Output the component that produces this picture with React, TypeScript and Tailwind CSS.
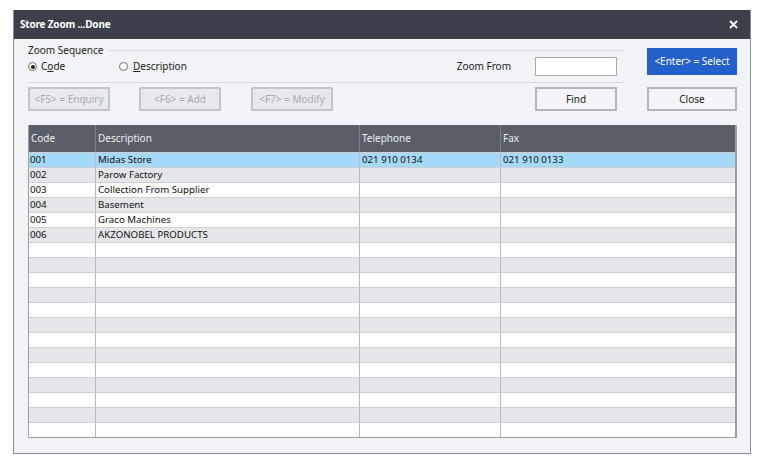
import React from "react";

const rows = [
  { code: "001", desc: "Midas Store", tel: "021 910 0134", fax: "021 910 0133" },
  { code: "002", desc: "Parow Factory", tel: "", fax: "" },
  { code: "003", desc: "Collection From Supplier", tel: "", fax: "" },
  { code: "004", desc: "Basement", tel: "", fax: "" },
  { code: "005", desc: "Graco Machines", tel: "", fax: "" },
  { code: "006", desc: "AKZONOBEL PRODUCTS", tel: "", fax: "" },
];

function Radio({ checked }: { checked?: boolean }) {
  return (
    <span className="w-[9px] h-[9px] rounded-full border border-[#6b6b6b] bg-white flex items-center justify-center">
      {checked && <span className="w-[4px] h-[4px] rounded-full bg-[#222]" />}
    </span>
  );
}

export default function App() {
  const allRows = Array.from({ length: 19 }, (_, i) => rows[i] ?? { code: "", desc: "", tel: "", fax: "" });

  return (
    <div className="min-h-screen bg-white pt-[10px] pl-[13px] font-['Noto_Sans',sans-serif]">
      <div className="w-[738px] h-[444px] bg-[#f2f3f7] border-x border-b border-[#8a8c92] flex flex-col">
        {/* Title bar */}
        <div className="h-[29px] bg-[#3c404c] flex items-center justify-between pl-[6px] pr-[12px] shrink-0">
          <span className="text-white text-[10px] font-bold tracking-[-0.2px]">Store Zoom ...Done</span>
          <svg width="9" height="9" viewBox="0 0 9 9">
            <path d="M1 1 L8 8 M8 1 L1 8" stroke="white" strokeWidth="1.8" />
          </svg>
        </div>

        <div className="flex flex-col flex-1 pl-[14px]">
          {/* Top controls */}
          <div className="flex gap-[22px]">
            <div className="w-[597px] flex flex-col pt-[5px]">
              <div className="h-[12px] flex items-center gap-[4px]">
                <span className="text-[10px] text-[#222] leading-none">Zoom Sequence</span>
                <div className="flex-1 h-[1px] bg-[#d8dae0]" />
              </div>
              <div className="h-[21px] flex items-center text-[10px] text-[#222]">
                <div className="flex items-center gap-[4px] w-[91px]">
                  <Radio checked />
                  <span>
                    C<span className="underline">o</span>de
                  </span>
                </div>
                <div className="flex items-center gap-[5px]">
                  <Radio />
                  <span>
                    <span className="underline">D</span>escription
                  </span>
                </div>
                <span className="ml-auto mr-[24px]">Zoom From</span>
                <div className="w-[82px] h-[19px] bg-white border border-[#a9abb0] mr-[8px]" />
              </div>
              <div className="mt-[5px] h-[1px] bg-[#d8dae0]" />
              <div className="mt-[4px] flex items-center text-[10px]">
                <button className="w-[82px] h-[24px] border-2 border-[#c4c6cb] bg-[#e8e9ec] text-[#a8aab0]">&lt;F5&gt; = Enquiry</button>
                <button className="ml-[29px] w-[82px] h-[24px] border-2 border-[#c4c6cb] bg-[#e8e9ec] text-[#a8aab0]">&lt;F6&gt; = Add</button>
                <button className="ml-[30px] w-[82px] h-[24px] border-2 border-[#c4c6cb] bg-[#e8e9ec] text-[#a8aab0]">&lt;F7&gt; = Modify</button>
                <button className="ml-auto mr-[8px] w-[82px] h-[24px] border-2 border-[#b4b6bb] bg-[#f4f5f8] text-[#222]">Find</button>
              </div>
            </div>
            <div className="w-[90px] flex flex-col text-[10px]">
              <button className="mt-[9px] h-[27px] bg-[#2460c9] text-white">&lt;Enter&gt; = Select</button>
              <button className="mt-[12px] h-[24px] border-2 border-[#b4b6bb] bg-[#f4f5f8] text-[#222]">Close</button>
            </div>
          </div>

          {/* Grid */}
          <div className="mt-[14px] w-[709px] border-l border-b border-r-2 border-[#9c9ea4] text-[9.7px]">
            <div className="h-[27px] bg-[#5a5e69] flex text-[#eceef2] text-[10px]">
              <div className="w-[67px] px-[2px] flex items-center border-r border-[#7c808a]">Code</div>
              <div className="w-[264px] px-[2px] flex items-center border-r border-[#7c808a]">Description</div>
              <div className="w-[141px] px-[2px] flex items-center border-r border-[#7c808a]">Telephone</div>
              <div className="flex-1 px-[2px] flex items-center">Fax</div>
            </div>
            {allRows.map((r, i) => (
              <div
                key={i}
                className={
                  "h-[15px] flex text-[#111] leading-none border-t border-[#cfd0d4] " +
                  (i === 0 ? "bg-[#a5d8f9]" : i % 2 === 1 ? "bg-[#e5e6ea]" : "bg-white")
                }
              >
                <div className="w-[67px] px-[1px] flex items-center border-r border-[#b8babe]">{r.code}</div>
                <div className="w-[264px] px-[2px] flex items-center border-r border-[#b8babe]">{r.desc}</div>
                <div className="w-[141px] px-[2px] flex items-center border-r border-[#b8babe]">{r.tel}</div>
                <div className="flex-1 px-[2px] flex items-center">{r.fax}</div>
              </div>
            ))}
          </div>
        </div>
      </div>
    </div>
  );
}
